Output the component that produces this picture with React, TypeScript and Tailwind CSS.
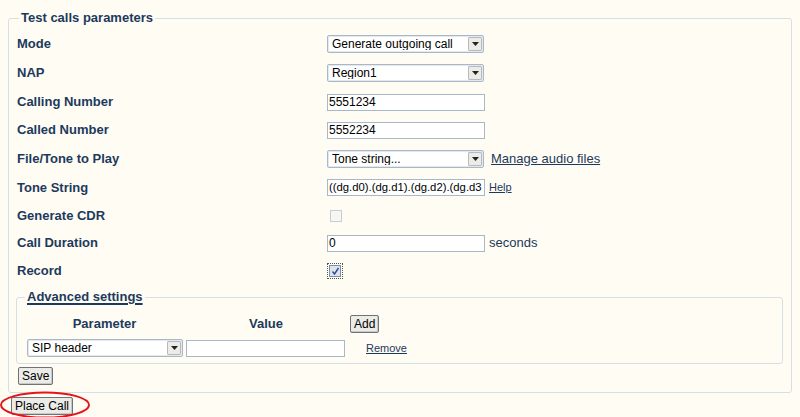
import React from 'react';

const NAVY = 'text-[#1c3a5c]';

const Select: React.FC<{ value: string; width: string }> = ({ value, width }) => (
    <div className={`${width} h-[18px] flex items-center bg-white border border-[#a9b8c9] rounded-[2px] shadow-[inset_0_0_0_1px_#e3e9ef]`}>
        <span className="flex-1 pl-[4px] text-[12px] text-black truncate leading-none">{value}</span>
        <span className="w-[14px] h-[14px] mr-[1px] flex items-center justify-center bg-[#ecebe6] border border-[#b7b9bc] rounded-[1px]">
            <svg width="7" height="4" viewBox="0 0 7 4"><path d="M0 0h7L3.5 4z" fill="#222" /></svg>
        </span>
    </div>
);

const Input: React.FC<{ value: string; width?: string; size?: string }> = ({ value, width = 'w-[158px]', size = 'text-[12px]' }) => (
    <div className={`${width} h-[17px] flex items-center bg-white border border-[#a9b8c9] overflow-hidden`}>
        <span className={`pl-[1px] ${size} text-black whitespace-nowrap leading-none`}>{value}</span>
    </div>
);

const Button: React.FC<{ label: string }> = ({ label }) => (
    <button className="h-[18px] px-[3px] text-[12px] leading-none text-black bg-[#ebebe8] border border-[#6e7377] rounded-[2px] shadow-[inset_-1px_-1px_0_#c8c8c4]">
        {label}
    </button>
);

const rows: { label: string; h: string; control: React.ReactNode }[] = [
    { label: 'Mode', h: 'h-[28px]', control: <Select value="Generate outgoing call" width="w-[157px]" /> },
    { label: 'NAP', h: 'h-[30px]', control: <Select value="Region1" width="w-[157px]" /> },
    { label: 'Calling Number', h: 'h-[28px]', control: <Input value="5551234" /> },
    { label: 'Called Number', h: 'h-[28px]', control: <Input value="5552234" /> },
    {
        label: 'File/Tone to Play',
        h: 'h-[29px]',
        control: (
            <div className="flex items-center gap-[7px]">
                <Select value="Tone string..." width="w-[157px]" />
                <a className={`text-[13px] underline ${NAVY}`}>Manage audio files</a>
            </div>
        ),
    },
    {
        label: 'Tone String',
        h: 'h-[29px]',
        control: (
            <div className="flex items-center gap-[4px]">
                <Input value="((dg.d0).(dg.d1).(dg.d2).(dg.d3" size="text-[11.3px]" />
                <a className={`text-[11px] underline ${NAVY}`}>Help</a>
            </div>
        ),
    },
    {
        label: 'Generate CDR',
        h: 'h-[27px]',
        control: <div className="ml-[3px] w-[12px] h-[12px] border border-[#c9cdd2] bg-[#f6f6f3]" />,
    },
    {
        label: 'Call Duration',
        h: 'h-[28px]',
        control: (
            <div className="flex items-center gap-[4px]">
                <Input value="0" />
                <span className={`text-[13px] ${NAVY}`}>seconds</span>
            </div>
        ),
    },
    {
        label: 'Record',
        h: 'h-[28px]',
        control: (
            <div className="w-[16px] h-[16px] border border-dotted border-[#555] flex items-center justify-center">
                <div className="w-[12px] h-[12px] border border-[#7a8fa8] bg-[#dfe3ea] flex items-center justify-center">
                    <svg width="9" height="9" viewBox="0 0 9 9"><path d="M1.5 4.5l2 2.5 4-6" stroke="#2a4a9a" strokeWidth="1.4" fill="none" /></svg>
                </div>
            </div>
        ),
    },
];

export default function App() {
    return (
        <div className="relative w-[800px] h-[417px] overflow-hidden bg-[#fffcf4] font-['Liberation_Sans',Arial,sans-serif]">
            <fieldset className="ml-[8px] mt-[10px] w-[784px] h-[383px] border border-[#d6dee6] rounded-[3px] px-[8px] pb-[6px] flex flex-col">
                <legend className={`ml-[2px] px-[2px] text-[13px] font-bold leading-[16px] ${NAVY}`}>Test calls parameters</legend>

                <div className="mt-[4px] flex flex-col">
                    {rows.map(r => (
                        <div key={r.label} className={`${r.h} flex items-center`}>
                            <div className={`w-[310px] text-[13px] font-bold ${NAVY}`}>{r.label}</div>
                            {r.control}
                        </div>
                    ))}
                </div>

                <fieldset className="-ml-[1px] mt-[4px] w-[767px] border border-[#d6dee6] rounded-[3px] pl-[10px] pb-[6px]">
                    <legend className={`-ml-[2px] px-[2px] text-[13px] font-bold leading-[16px] underline decoration-[2px] underline-offset-[2px] ${NAVY}`}>
                        Advanced settings
                    </legend>
                    <div className="mt-[10px] flex items-center h-[18px]">
                        <div className={`w-[155px] text-center text-[13px] font-bold ${NAVY}`}>Parameter</div>
                        <div className={`ml-[4px] w-[160px] text-center text-[13px] font-bold ${NAVY}`}>Value</div>
                        <div className="ml-[4px] flex"><Button label="Add" /></div>
                    </div>
                    <div className="mt-[6px] flex items-center">
                        <Select value="SIP header" width="w-[156px]" />
                        <div className="ml-[3px] flex"><Input value="" width="w-[159px]" /></div>
                        <a className={`ml-[21px] text-[11px] underline ${NAVY}`}>Remove</a>
                    </div>
                </fieldset>

                <div className="mt-[3px] ml-[1px] flex"><Button label="Save" /></div>
            </fieldset>

            <div className="ml-[11px] mt-[4px] flex"><Button label="Place Call" /></div>

            <svg className="absolute left-0 top-[388px]" width="96" height="30" viewBox="0 0 96 30">
                <ellipse cx="45" cy="17" rx="44" ry="12.5" fill="none" stroke="#e3141b" strokeWidth="2" />
            </svg>
        </div>
    );
}
